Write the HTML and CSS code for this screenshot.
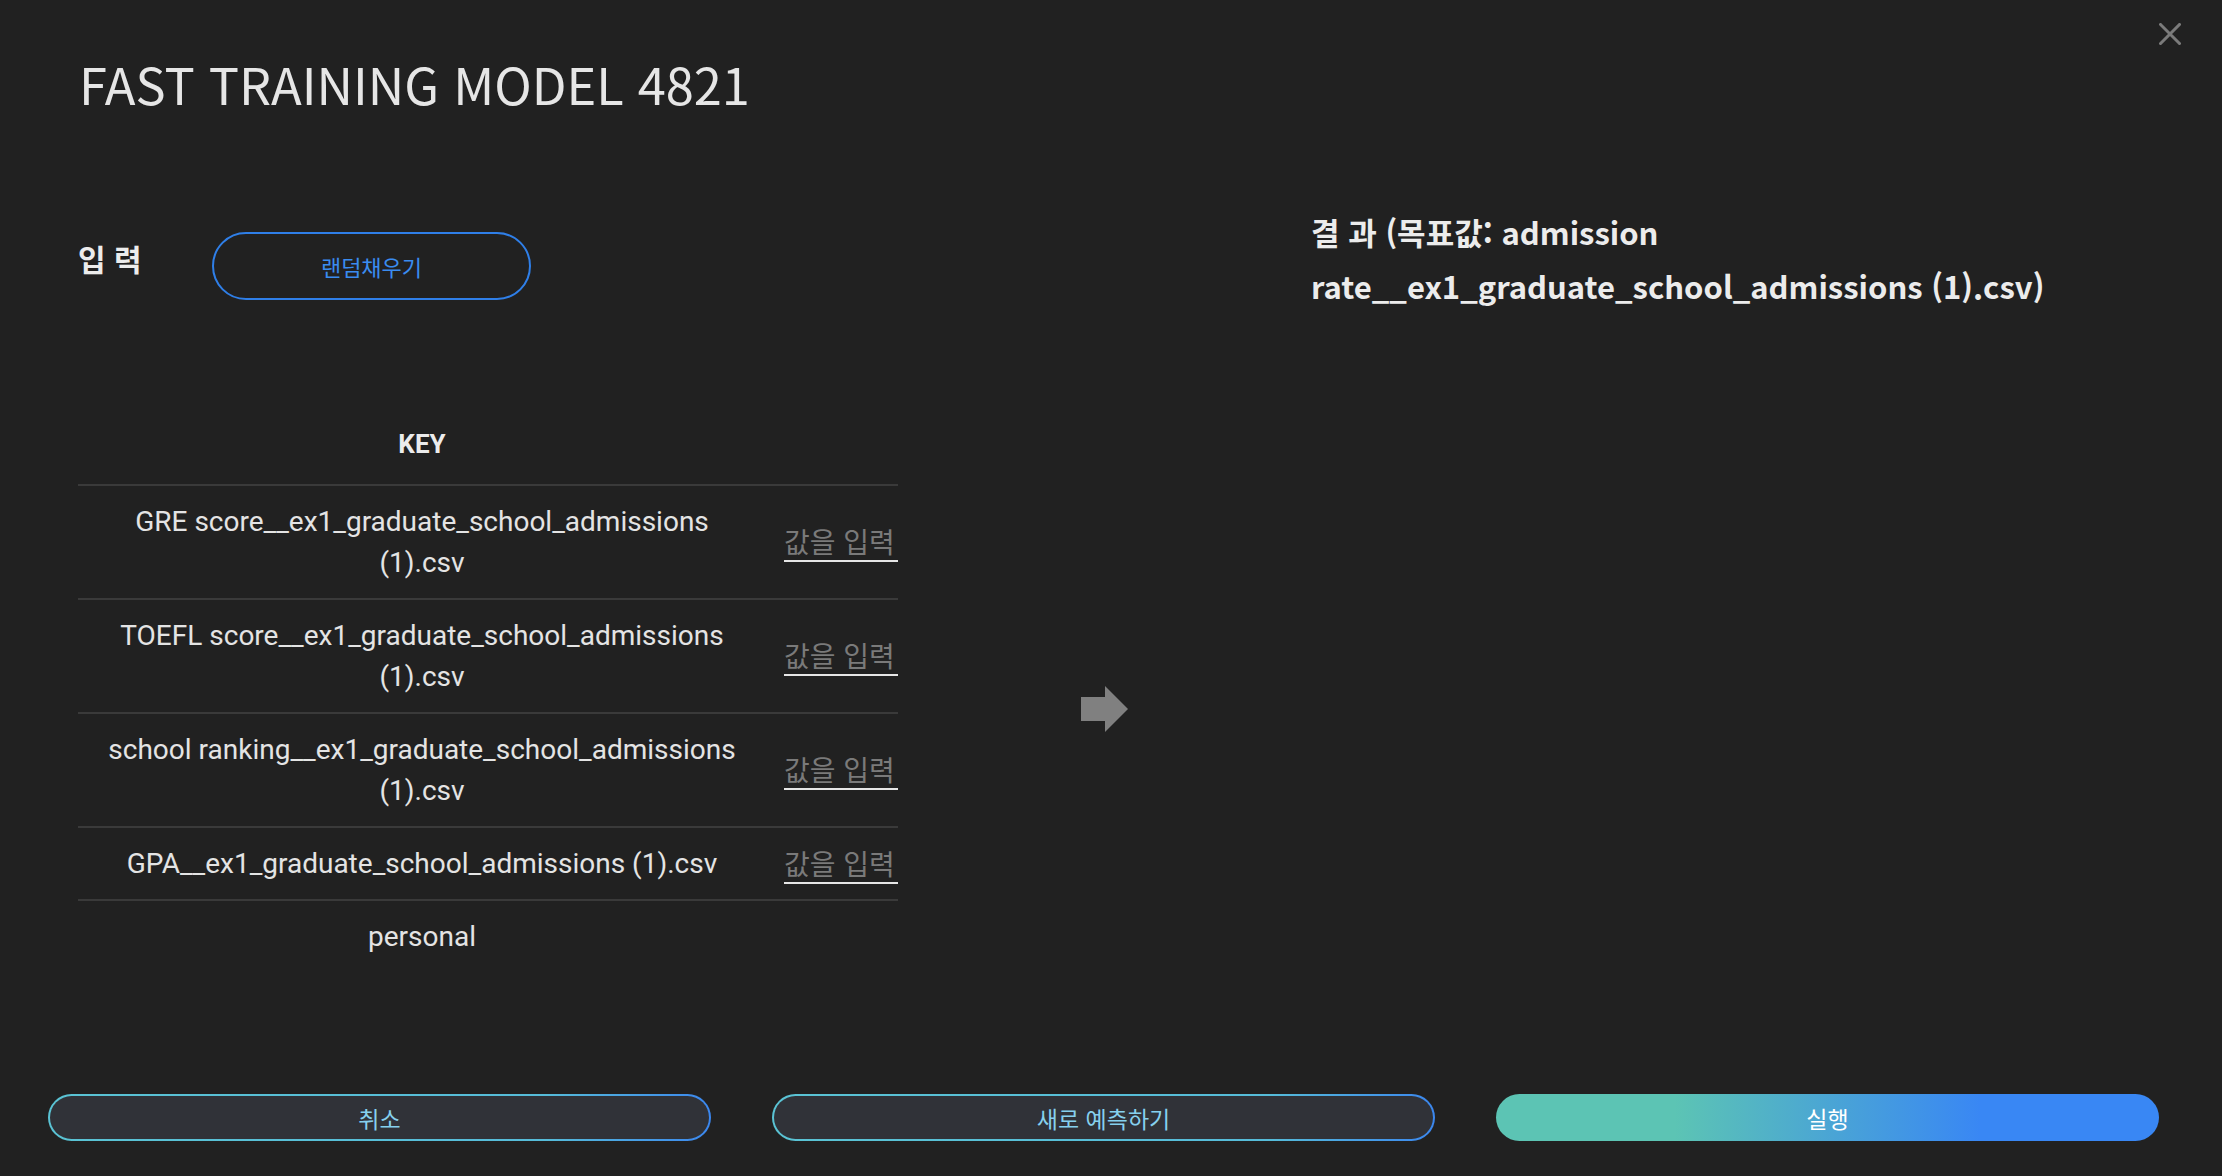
FILE: index.html
```html
<!DOCTYPE html>
<html lang="ko">
<head>
<meta charset="utf-8">
<title>FAST TRAINING MODEL 4821</title>
<link rel="stylesheet" href="styles.css">
</head>
<body>
<div class="modal">
  <button class="close" aria-label="닫기">
    <svg width="22" height="22" viewBox="0 0 22 22"><path d="M1.5 1.5 L20.5 20.5 M20.5 1.5 L1.5 20.5" stroke="#7b7b7b" stroke-width="3" stroke-linecap="square" fill="none"/></svg>
  </button>
  <h1 class="title">FAST TRAINING MODEL 4821</h1>
  <div class="content">
    <section class="input-col">
      <div class="input-head">
        <div class="input-label">입 력</div>
        <button class="random-btn">랜덤채우기</button>
      </div>
      <div class="table-wrap">
        <table class="kv">
          <colgroup><col class="c-key"><col class="c-val"></colgroup>
          <thead><tr><th>KEY</th><th></th></tr></thead>
          <tbody>
            <tr><td class="key">GRE score__ex1_graduate_school_admissions (1).csv</td><td class="val"><input type="text" placeholder="값을 입력"></td></tr>
            <tr><td class="key">TOEFL score__ex1_graduate_school_admissions (1).csv</td><td class="val"><input type="text" placeholder="값을 입력"></td></tr>
            <tr><td class="key">school ranking__ex1_graduate_school_admissions (1).csv</td><td class="val"><input type="text" placeholder="값을 입력"></td></tr>
            <tr><td class="key">GPA__ex1_graduate_school_admissions (1).csv</td><td class="val"><input type="text" placeholder="값을 입력"></td></tr>
            <tr><td class="key">personal statement__ex1_graduate_school_admissions (1).csv</td><td class="val"><input type="text" placeholder="값을 입력"></td></tr>
          </tbody>
        </table>
      </div>
    </section>
    <div class="arrow-col">
      <svg width="47" height="46" viewBox="0 0 47 46"><path d="M0 11 H24 V0 L47 23 L24 46 V35 H0 Z" fill="#808080"/></svg>
    </div>
    <section class="result-col">
      <h2 class="result-title">결 과 (목표값: admission rate__ex1_graduate_school_admissions (1).csv)</h2>
    </section>
  </div>
  <footer class="actions">
    <button class="btn btn-outline">취소</button>
    <button class="btn btn-outline">새로 예측하기</button>
    <button class="btn btn-primary">실행</button>
  </footer>
</div>
</body>
</html>
```
FILE: styles.css
```css
html, body {
  margin: 0;
  padding: 0;
  background: #212121;
  height: 100%;
  overflow: hidden;
}

.modal {
  position: relative;
  box-sizing: border-box;
  height: 100vh;
  display: flex;
  flex-direction: column;
  padding: 53px 0 35px;
  color: #e8e8e8;
  font-family: "Noto Sans CJK KR", "Noto Sans", sans-serif;
}

.close {
  position: absolute;
  top: 23px;
  right: 41px;
  width: 22px;
  height: 22px;
  padding: 0;
  border: none;
  background: none;
  line-height: 0;
}

.title {
  margin: 0 0 0 79px;
  font-family: "Noto Sans CJK KR", sans-serif;
  font-weight: 400;
  font-size: 50.5px;
  line-height: 60px;
  color: #e6e6e6;
  letter-spacing: 0;
}

.content {
  display: flex;
  margin-top: 92px;
  padding-left: 78px;
}

.input-col {
  width: 820px;
  flex: none;
}

.input-head {
  display: flex;
  align-items: flex-start;
  padding-top: 27px;
}

.input-label {
  width: 134px;
  font-weight: 700;
  font-size: 30px;
  line-height: 52px;
  color: #ececec;
}

.random-btn {
  box-sizing: border-box;
  width: 319px;
  height: 68px;
  border: 2px solid #2f7fe8;
  border-radius: 34px;
  background: transparent;
  color: #3a8cf0;
  font-family: "Noto Sans CJK KR", sans-serif;
  font-size: 22px;
  padding: 0;
}

.table-wrap {
  margin-top: 105px;
  height: 559px;
  overflow: hidden;
}

.kv {
  width: 820px;
  table-layout: fixed;
  border-collapse: separate;
  border-spacing: 0;
}

.c-key { width: 688px; }
.c-val { width: 132px; }

.kv th {
  padding: 0;
  line-height: 79px;
  font-family: Roboto, "Noto Sans CJK KR", sans-serif;
  font-weight: 700;
  font-size: 26px;
  color: #ececec;
  border-bottom: 2px solid #3a3a3a;
}

.kv td {
  border-bottom: 2px solid #3a3a3a;
}

.kv td.key {
  padding: 15px 28px;
  text-align: center;
  font-family: Roboto, "Noto Sans CJK KR", sans-serif;
  font-size: 28px;
  line-height: 41px;
  color: #e4e4e4;
}

.kv td.val {
  padding: 0 0 0 18px;
  vertical-align: middle;
}

.kv input {
  display: block;
  box-sizing: border-box;
  width: 114px;
  height: 40px;
  padding: 0;
  border: none;
  border-bottom: 2px solid #e6e6e6;
  background: transparent;
  font-family: "Noto Sans CJK KR", sans-serif;
  font-size: 28px;
  color: #e6e6e6;
  outline: none;
}

.kv input::placeholder {
  color: #7a7a7a;
}

.arrow-col {
  width: 413px;
  flex: none;
  display: flex;
  justify-content: center;
  align-items: flex-start;
  padding-top: 481px;
}

.result-col {
  flex: 1;
  padding-right: 60px;
}

.result-title {
  margin: 0;
  font-weight: 700;
  font-size: 31px;
  line-height: 54px;
  color: #ececec;
}

.actions {
  margin-top: auto;
  display: grid;
  grid-template-columns: repeat(3, 663px);
  column-gap: 61px;
  padding-left: 48px;
}

.btn {
  box-sizing: border-box;
  height: 47px;
  border-radius: 24px;
  font-family: "Noto Sans CJK KR", sans-serif;
  font-size: 23px;
  padding: 0;
}

.btn-outline {
  border: 2px solid transparent;
  background:
    linear-gradient(#303238, #303238) padding-box,
    linear-gradient(to right, #5ac3d4 0%, #56bcd9 75%, #3b87ef 100%) border-box;
  color: #86d0ee;
}

.btn-primary {
  border: none;
  background: linear-gradient(to right, #5cc4b4 27%, #3987f4 73%);
  color: #ffffff;
}
```
